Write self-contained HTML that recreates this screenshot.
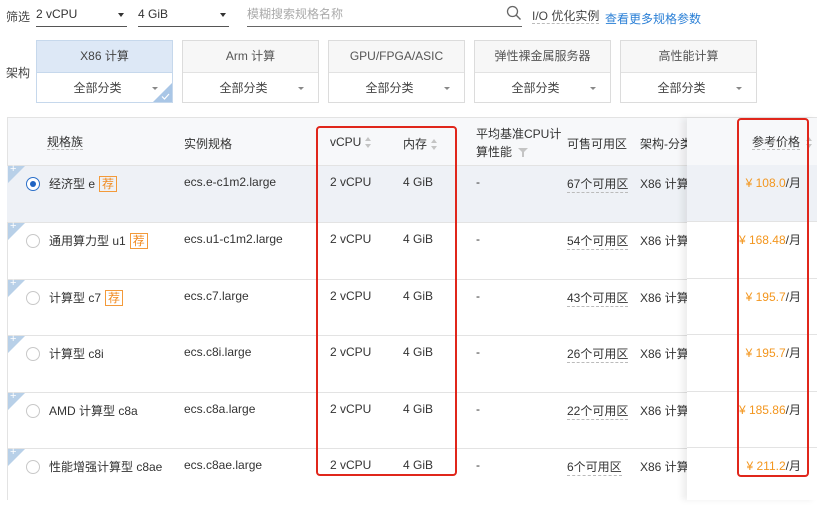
<!DOCTYPE html>
<html><head><meta charset="utf-8"><style>
*{margin:0;padding:0;box-sizing:border-box}
body{width:817px;height:500px;overflow:hidden;background:#fff;font-family:"Liberation Sans","Noto Sans CJK SC",sans-serif;color:#333;font-size:12px;position:relative}
.a{position:absolute;white-space:nowrap}
.sel{border-bottom:1px solid #555;height:24px}
.card{position:absolute;top:40px;width:137px;height:63px;border:1px solid #dcdcdc;background:#fff}
.card .t{height:32px;line-height:31px;text-align:center;background:#f7f7f7;border-bottom:1px solid #e2e2e2;color:#555}
.card .b{height:30px;line-height:30px;text-align:center;color:#444;position:relative;padding-right:14px}
.card .b:after{content:"";position:absolute;right:14px;top:14px;border:3px solid transparent;border-top:3px solid #888}
.row{position:absolute;left:7px;width:810px;height:57px;border-top:1px solid #e3e3e3;font-size:12px}
.row .tri{position:absolute;left:1px;top:0;width:0;height:0;border-top:17px solid #b8d0e8;border-right:17px solid transparent}
.row .plus{position:absolute;left:3px;top:-3px;color:#fff;font-size:11px}
.rad{position:absolute;left:19px;top:11px;width:14px;height:14px;border:1px solid #c8c8c8;border-radius:50%;background:#fff}
.rec{display:inline-block;border:1px solid #f39a3a;color:#f08a20;font-size:12px;line-height:14px;padding:0 2px;margin-left:4px}
.c{position:absolute;top:9px}
.dash{border-bottom:1px dashed #bbb}
.price{position:absolute;right:16px;color:#333}
.price span{color:#f3961e}
.sort{display:inline-block;vertical-align:middle;margin-left:4px;width:7px;height:11px;position:relative}
.sort:before{content:"";position:absolute;top:0;left:0;border:3.5px solid transparent;border-bottom:4px solid #c4c4c4;border-top:0}
.sort:after{content:"";position:absolute;bottom:0;left:0;border:3.5px solid transparent;border-top:4px solid #c4c4c4;border-bottom:0}
</style></head><body>
<div class="a" style="left:6px;top:8px;color:#444">筛选</div>
<div class="a sel" style="left:36px;top:3px;width:91px;line-height:22px">2 vCPU<span style="position:absolute;right:3px;top:10px;border:3px solid transparent;border-top:4px solid #333"></span></div>
<div class="a sel" style="left:138px;top:3px;width:91px;line-height:22px">4 GiB<span style="position:absolute;right:3px;top:10px;border:3px solid transparent;border-top:4px solid #333"></span></div>
<div class="a sel" style="left:247px;top:3px;width:275px;line-height:22px;color:#aaa;border-bottom-color:#666">模糊搜索规格名称</div>
<svg class="a" style="left:506px;top:5px" width="16" height="16" viewBox="0 0 16 16"><circle cx="6.5" cy="6.5" r="5" fill="none" stroke="#666" stroke-width="1.3"/><line x1="10.3" y1="10.3" x2="14.5" y2="14.5" stroke="#666" stroke-width="1.4"/></svg>
<div class="a dash" style="left:532px;top:9px;color:#444;line-height:14px">I/O 优化实例</div>
<div class="a" style="left:605px;top:10px;color:#2a7fd6">查看更多规格参数</div>

<div class="a" style="left:6px;top:64px;color:#444">架构</div>
<div class="card" style="left:36px;border-color:#c6d8ec"><div class="t" style="background:#dde8f6;border-color:#c6d8ec;color:#444">X86 计算</div><div class="b">全部分类</div>
<div style="position:absolute;right:0;bottom:0;border-bottom:19px solid #a9c6e6;border-left:19px solid transparent"></div>
<svg style="position:absolute;right:2px;bottom:2px" width="9" height="7"><path d="M1 3.5 L3.5 6 L8 1" fill="none" stroke="#fff" stroke-width="1.2"/></svg></div>
<div class="card" style="left:182px"><div class="t">Arm 计算</div><div class="b">全部分类</div></div>
<div class="card" style="left:328px"><div class="t">GPU/FPGA/ASIC</div><div class="b">全部分类</div></div>
<div class="card" style="left:474px"><div class="t">弹性裸金属服务器</div><div class="b">全部分类</div></div>
<div class="card" style="left:620px"><div class="t">高性能计算</div><div class="b">全部分类</div></div>

<div class="a" style="left:7px;top:117px;width:810px;height:383px;border-left:1px solid #e3e3e3;border-top:1px solid #e3e3e3;background:#fff"></div>
<div class="a" style="left:8px;top:118px;width:809px;height:47px;background:#f7f8fa"></div>
<div class="a dash" style="left:47px;top:135px;line-height:14px">规格族</div>
<div class="a" style="left:184px;top:135px">实例规格</div>
<div class="a" style="left:330px;top:135px">vCPU<span class="sort"></span></div>
<div class="a" style="left:403px;top:135px">内存<span class="sort"></span></div>
<div class="a" style="left:476px;top:125px;line-height:18px">平均基准CPU计<br>算性能 <svg width="10" height="9" style="vertical-align:middle;margin-left:3px"><path d="M0 0H10L6 4V9H4V4Z" fill="#c4c4c4"/></svg></div>
<div class="a" style="left:567px;top:135px">可售可用区</div>
<div class="a" style="left:640px;top:135px">架构-分类</div>

<div class="row" style="top:165px;background:#eef1f6"><div class="tri"></div><div class="plus">+</div>
<div class="rad" style="border-color:#2a6fc9"><div style="position:absolute;left:3px;top:3px;width:6px;height:6px;border-radius:50%;background:#1f63c2"></div></div>
<div class="c" style="left:42px">经济型 e<span class="rec">荐</span></div><div class="c" style="left:177px">ecs.e-c1m2.large</div><div class="c" style="left:323px">2 vCPU</div><div class="c" style="left:396px">4 GiB</div><div class="c" style="left:469px">-</div><div class="c dash" style="left:560px">67个可用区</div><div class="c" style="left:633px">X86 计算</div></div>
<div class="row" style="top:222px"><div class="tri"></div><div class="plus">+</div><div class="rad"></div>
<div class="c" style="left:42px">通用算力型 u1<span class="rec">荐</span></div><div class="c" style="left:177px">ecs.u1-c1m2.large</div><div class="c" style="left:323px">2 vCPU</div><div class="c" style="left:396px">4 GiB</div><div class="c" style="left:469px">-</div><div class="c dash" style="left:560px">54个可用区</div><div class="c" style="left:633px">X86 计算</div></div>
<div class="row" style="top:279px"><div class="tri"></div><div class="plus">+</div><div class="rad"></div>
<div class="c" style="left:42px">计算型 c7<span class="rec">荐</span></div><div class="c" style="left:177px">ecs.c7.large</div><div class="c" style="left:323px">2 vCPU</div><div class="c" style="left:396px">4 GiB</div><div class="c" style="left:469px">-</div><div class="c dash" style="left:560px">43个可用区</div><div class="c" style="left:633px">X86 计算</div></div>
<div class="row" style="top:335px"><div class="tri"></div><div class="plus">+</div><div class="rad"></div>
<div class="c" style="left:42px">计算型 c8i</div><div class="c" style="left:177px">ecs.c8i.large</div><div class="c" style="left:323px">2 vCPU</div><div class="c" style="left:396px">4 GiB</div><div class="c" style="left:469px">-</div><div class="c dash" style="left:560px">26个可用区</div><div class="c" style="left:633px">X86 计算</div></div>
<div class="row" style="top:392px"><div class="tri"></div><div class="plus">+</div><div class="rad"></div>
<div class="c" style="left:42px">AMD 计算型 c8a</div><div class="c" style="left:177px">ecs.c8a.large</div><div class="c" style="left:323px">2 vCPU</div><div class="c" style="left:396px">4 GiB</div><div class="c" style="left:469px">-</div><div class="c dash" style="left:560px">22个可用区</div><div class="c" style="left:633px">X86 计算</div></div>
<div class="row" style="top:448px"><div class="tri"></div><div class="plus">+</div><div class="rad"></div>
<div class="c" style="left:42px">性能增强计算型 c8ae</div><div class="c" style="left:177px">ecs.c8ae.large</div><div class="c" style="left:323px">2 vCPU</div><div class="c" style="left:396px">4 GiB</div><div class="c" style="left:469px">-</div><div class="c dash" style="left:560px">6个可用区</div><div class="c" style="left:633px">X86 计算</div></div>

<div class="a" style="left:687px;top:118px;width:130px;height:382px;box-shadow:-5px 0 6px rgba(0,0,0,0.07);background:transparent">
<div style="position:absolute;left:0;top:0;width:130px;height:47px;background:#f7f8fa"></div>
<div style="position:absolute;left:0;top:47px;width:130px;height:57px;background:#eef1f6"></div>
<div style="position:absolute;left:0;top:47px;width:130px;height:57px;border-bottom:1px solid #e3e3e3"></div>
<div style="position:absolute;left:0;top:104px;width:130px;height:57px;background:#fff;border-bottom:1px solid #e3e3e3"></div>
<div style="position:absolute;left:0;top:161px;width:130px;height:56px;background:#fff;border-bottom:1px solid #e3e3e3"></div>
<div style="position:absolute;left:0;top:217px;width:130px;height:57px;background:#fff;border-bottom:1px solid #e3e3e3"></div>
<div style="position:absolute;left:0;top:274px;width:130px;height:56px;background:#fff;border-bottom:1px solid #e3e3e3"></div>
<div style="position:absolute;left:0;top:330px;width:130px;height:52px;background:#fff"></div>
<div class="dash" style="position:absolute;right:17px;top:17px;line-height:14px">参考价格</div>
<div class="sort" style="position:absolute;right:4px;top:19px"></div>
<div class="price" style="top:56px"><span>¥ 108.0</span>/月</div>
<div class="price" style="top:113px"><span>¥ 168.48</span>/月</div>
<div class="price" style="top:170px"><span>¥ 195.7</span>/月</div>
<div class="price" style="top:226px"><span>¥ 195.7</span>/月</div>
<div class="price" style="top:283px"><span>¥ 185.86</span>/月</div>
<div class="price" style="top:339px"><span>¥ 211.2</span>/月</div>
</div>

<div class="a" style="left:316px;top:126px;width:141px;height:350px;border:2.5px solid #e0261b;border-radius:4px"></div>
<div class="a" style="left:737px;top:118px;width:72px;height:359px;border:2.5px solid #e0261b;border-radius:4px"></div>
</body></html>
